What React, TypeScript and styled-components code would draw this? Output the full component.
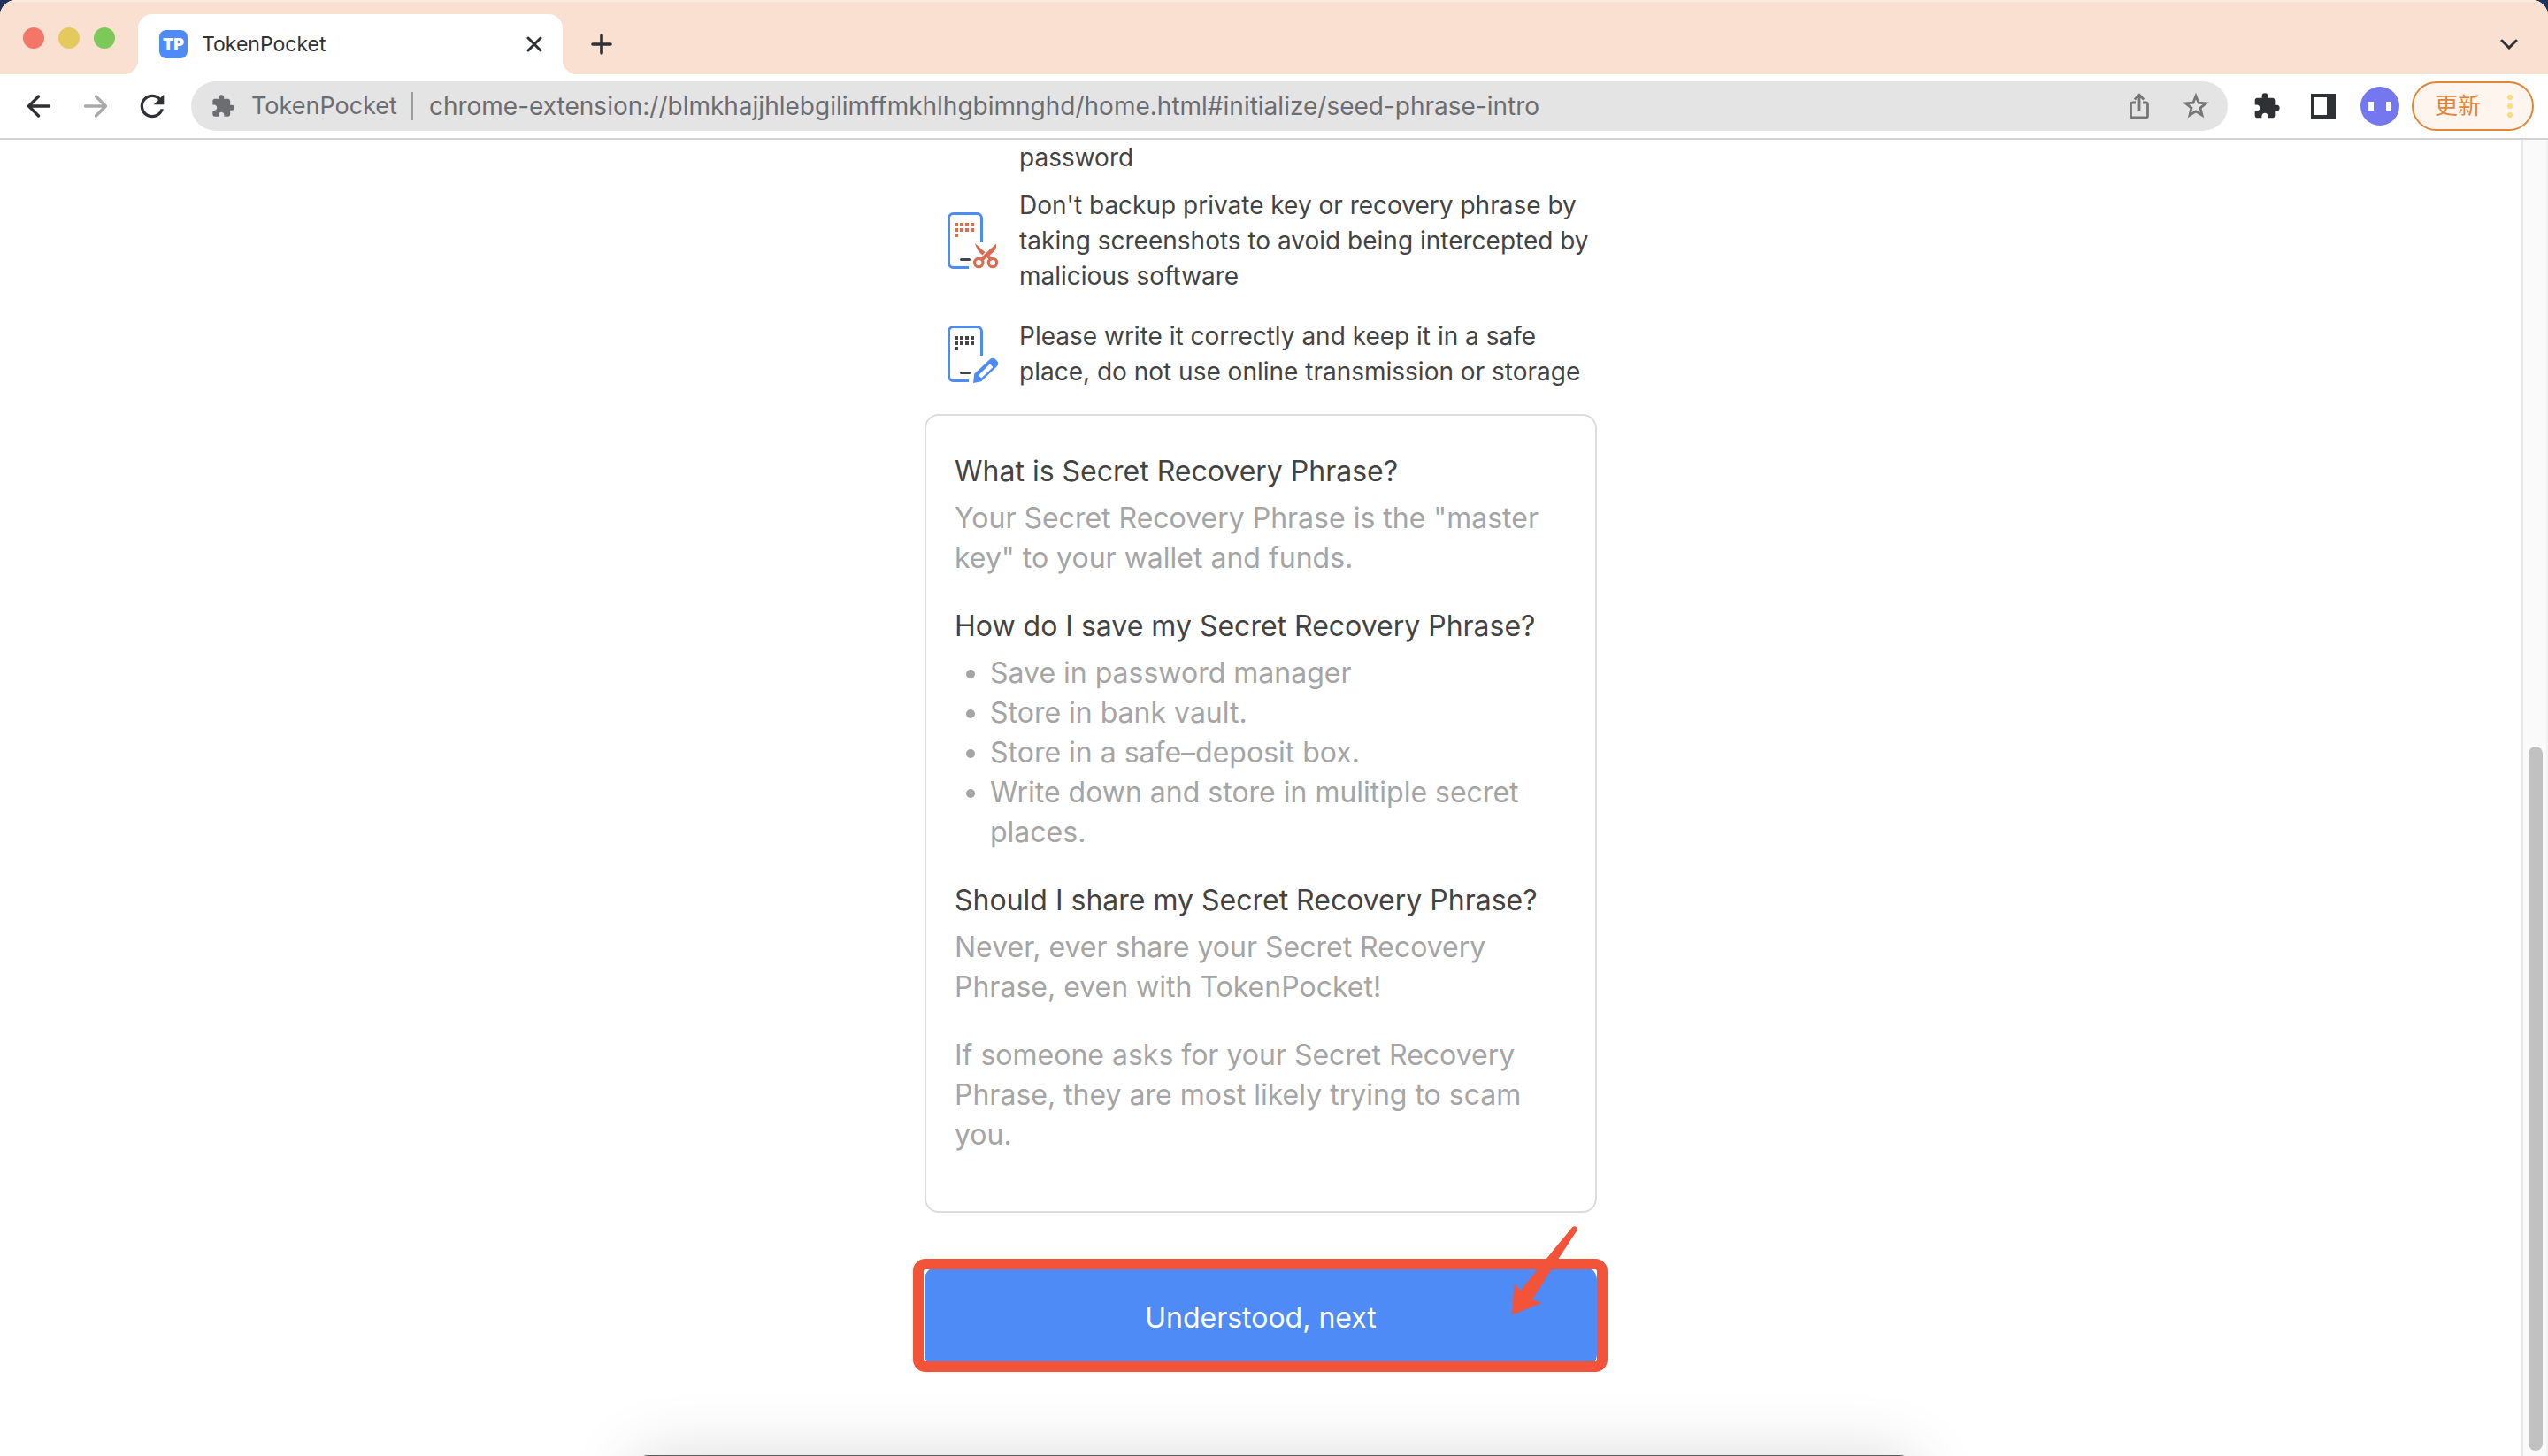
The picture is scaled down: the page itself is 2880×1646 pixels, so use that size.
import React from "react";
import styled, { createGlobalStyle } from "styled-components";
import { MdExtension, MdRefresh } from "react-icons/md";

const sans = `Inter, "Noto Sans CJK SC", sans-serif`;

const GlobalStyle = createGlobalStyle`
  *, *::before, *::after { box-sizing: border-box; }
  body { margin: 0; background: #1d3358; font-family: ${sans}; color: #434343; }
  button, input { font: inherit; color: inherit; }
  h2, p, ul { margin: 0; }
`;

const Window = styled.div`
  display: flex;
  flex-direction: column;
  min-height: 100vh;
  background: #fff;
  border-radius: 18px 18px 0 0;
  overflow: hidden;
`;

/* ---------- tab strip ---------- */

const TabStrip = styled.header`
  display: flex;
  align-items: flex-end;
  height: 84px;
  padding: 0 20px 0 26px;
  background: #fae0d1;
  border-top: 2px solid #fceae1;
`;

const TrafficLights = styled.div`
  display: flex;
  align-items: center;
  align-self: stretch;
  gap: 16px;
  margin-right: 26px;
`;

const Light = styled.button<{ $color: string }>`
  width: 24px;
  height: 24px;
  padding: 0;
  border: 0;
  border-radius: 50%;
  background: ${(p) => p.$color};
`;

const Tab = styled.div`
  position: relative;
  display: flex;
  align-items: center;
  width: 480px;
  height: 68px;
  padding: 0 8px 0 24px;
  border-radius: 16px 16px 0 0;
  background: #fff;

  &::before,
  &::after {
    content: "";
    position: absolute;
    bottom: 0;
    width: 16px;
    height: 16px;
  }
  &::before {
    right: 100%;
    background: radial-gradient(circle at 0 0, transparent 16px, #fff 16px);
  }
  &::after {
    left: 100%;
    background: radial-gradient(circle at 100% 0, transparent 16px, #fff 16px);
  }
`;

const Favicon = styled.span`
  display: grid;
  place-items: center;
  width: 32px;
  height: 32px;
  margin-right: 16px;
  border-radius: 8px;
  background: #4f8bf7;
  color: #fff;
  font-size: 18px;
  font-weight: 900;
  line-height: 32px;
`;

const TabTitle = styled.span`
  flex: 1;
  font-size: 23px;
  line-height: 32px;
  color: #303134;
`;

const IconButton = styled.button<{ $color?: string }>`
  display: grid;
  place-items: center;
  flex: none;
  width: 48px;
  height: 48px;
  padding: 0;
  border: 0;
  background: none;
  color: ${(p) => p.$color ?? "#303134"};
`;

const StripButton = styled(IconButton)`
  height: 68px;
`;

const NewTab = styled(StripButton)`
  margin: 0 auto 0 20px;
`;

/* ---------- toolbar ---------- */

const Toolbar = styled.nav`
  display: flex;
  align-items: center;
  gap: 16px;
  height: 74px;
  padding: 0 16px 0 20px;
  border-bottom: 2px solid #d3d3d3;
`;

const Omnibox = styled.div`
  display: flex;
  flex: 1;
  align-items: center;
  height: 56px;
  margin: 0 4px;
  padding: 0 12px 0 22px;
  border-radius: 28px;
  background: #e4e4e4;
  color: #6c6d71;
`;

const Origin = styled.button`
  display: flex;
  align-items: center;
  gap: 18px;
  padding: 0;
  border: 0;
  background: none;
  font-size: 27px;
  line-height: 32px;
`;

const Divider = styled.span`
  width: 2px;
  height: 32px;
  margin: 0 18px 0 16px;
  background: #9c9c9e;
`;

const Address = styled.input`
  flex: 1;
  min-width: 0;
  padding: 0;
  border: 0;
  outline: 0;
  background: none;
  font-size: 28px;
  line-height: 32px;
`;

const OmniboxActions = styled.div`
  display: flex;
  gap: 16px;
`;

const Avatar = styled.button`
  display: flex;
  align-items: center;
  justify-content: center;
  gap: 14px;
  flex: none;
  width: 44px;
  height: 44px;
  margin: 0 -2px 0 2px;
  padding: 0;
  border: 0;
  border-radius: 50%;
  background: #7477ee;
`;

const Eye = styled.span`
  flex: none;
  width: 6px;
  height: 10px;
  background: #fff;
`;

const UpdateButton = styled.button`
  display: flex;
  align-items: center;
  justify-content: space-between;
  width: 138px;
  height: 56px;
  padding: 0 22px 0 24px;
  border: 2px solid #e0863a;
  border-radius: 28px;
  background: #fef5ee;
  color: #e0863a;
  font-size: 26px;
  line-height: 32px;
`;

/* ---------- page ---------- */

const Viewport = styled.div`
  display: flex;
  flex: 1;
`;

const Page = styled.main`
  flex: 1;
`;

const Column = styled.div`
  width: 760px;
  margin: 0 auto;
`;

const Tip = styled.div<{ $after: number }>`
  display: grid;
  grid-template-columns: 64px 1fr;
  column-gap: 21px;
  align-items: center;
  padding-left: 22px;
  margin-bottom: ${(p) => p.$after}px;
  font-size: 28px;
  line-height: 40px;

  p {
    grid-column: 2;
  }
`;

const Card = styled.section`
  padding: 40px 32px 64px;
  border: 2px solid #dcdcdc;
  border-radius: 16px;
  font-size: 32px;
  line-height: 45px;
`;

const Question = styled.h2`
  margin-bottom: 8px;
  font-size: 32px;
  font-weight: 400;
`;

const Answer = styled.p`
  color: #a5a5a5;

  & + &, & + ${Question} {
    margin-top: 32px;
  }
`;

const AnswerList = styled.ul`
  margin-bottom: 32px;
  padding-left: 40px;
  color: #a5a5a5;
`;

const Action = styled.div`
  position: relative;
  margin: 60px 0 98px;
`;

const Primary = styled.button`
  display: block;
  width: 100%;
  height: 116px;
  border: 0;
  border-radius: 16px;
  background: #4f8bf7;
  color: #fff;
  font-size: 32px;
`;

const Highlight = styled.div`
  position: absolute;
  inset: -8px -12px -4px -13px;
  border: 12px solid #f35339;
  border-radius: 14px;
  pointer-events: none;
`;

const Arrow = styled.svg`
  position: absolute;
  top: -47px;
  right: 19px;
  fill: #f35339;
  pointer-events: none;
`;

const ScrollTrack = styled.div`
  display: flex;
  flex-direction: column;
  width: 30px;
  padding: 0 4px 6px 6px;
  border-left: 2px solid #e8e8e8;
  border-right: 2px solid #f3f3f3;
  background: #fafafa;

  &::before {
    content: "";
    flex: 686;
  }
`;

const Thumb = styled.div`
  flex: 796;
  border-radius: 8px;
  background: #c1c1c1;
`;

const DockedWindow = styled.div`
  position: fixed;
  bottom: -199px;
  left: 50%;
  width: 1440px;
  height: 200px;
  margin-left: -720px;
  border-radius: 12px;
  background: #5c5c5c;
  box-shadow: 0 8px 80px rgba(0, 0, 0, 0.18);
`;

/* ---------- drawings ---------- */

function ArrowIcon({ forward }: { forward?: boolean }) {
  return (
    <svg width="32" height="32" viewBox="0 0 32 32" fill="none" stroke="currentColor" strokeWidth="3.4" strokeLinecap="round" strokeLinejoin="round">
      {forward ? <path d="M4.5 16H27M16.5 5l11 11-11 11" /> : <path d="M27.5 16H5M15.5 5l-11 11 11 11" />}
    </svg>
  );
}

function PhoneIcon({ dots, children }: { dots: string; children: React.ReactNode }) {
  const cells = [0, 1, 2, 3, 4, 5, 6, 7, 8];
  return (
    <svg width="64" height="72" viewBox="-1 0 64 72" aria-hidden="true">
      <path d="M41.5 38V10.5a5 5 0 0 0-5-5h-27a5 5 0 0 0-5 5v51a5 5 0 0 0 5 5H27" fill="none" stroke="#4f8bf7" strokeWidth="3" />
      {cells.map((i) => (
        <rect key={i} x={11 + (i % 4) * 6} y={16 + Math.floor(i / 4) * 6} width="4" height="4" fill={dots} />
      ))}
      <rect x="17" y="56" width="12" height="3" rx="1.5" fill="#434343" />
      {children}
    </svg>
  );
}

function Scissors() {
  return (
    <g fill="#dd6b50">
      <path d="M58 39.5v4.2q-1 3.6-4 6l-11 9.3-3-3z" />
      <path d="M34 39l11.5 10.2-3 3.3q-6-4-8.5-13.5z" />
      <path d="M46.8 54.5l2.7-2.4 5 4.2-2.5 3z" />
      <circle cx="38.3" cy="61" r="4.7" fill="none" stroke="#dd6b50" strokeWidth="3.2" />
      <circle cx="54" cy="61" r="4.7" fill="none" stroke="#dd6b50" strokeWidth="3.2" />
    </g>
  );
}

function Pencil() {
  return (
    <path
      fill="#4f8bf7"
      fillRule="evenodd"
      d="M32 69l1.3-10.5L51 42q3.3-2.5 6.300.3l1.700 1.700q2.600 3 0 6L41 67.200zM38 60.300l3.300 3.300L54.300 51 51 47.300z"
    />
  );
}

/* ---------- app ---------- */

export default function App() {
  return (
    <Window>
      <GlobalStyle />
      <TabStrip>
        <TrafficLights>
          <Light $color="#f37669" aria-label="Close window" />
          <Light $color="#e4c95d" aria-label="Minimize window" />
          <Light $color="#7cc95a" aria-label="Zoom window" />
        </TrafficLights>
        <Tab>
          <Favicon>TP</Favicon>
          <TabTitle>TokenPocket</TabTitle>
          <IconButton aria-label="Close tab">
            <svg width="18" height="18" viewBox="0 0 18 18" stroke="currentColor" strokeWidth="3" strokeLinecap="round">
              <path d="M2 2l14 14M16 2L2 16" />
            </svg>
          </IconButton>
        </Tab>
        <NewTab aria-label="New tab">
          <svg width="24" height="24" viewBox="0 0 24 24" stroke="currentColor" strokeWidth="3.6" strokeLinecap="round">
            <path d="M12 2v20M2 12h20" />
          </svg>
        </NewTab>
        <StripButton aria-label="Search tabs">
          <svg width="20" height="12" viewBox="0 0 20 12" fill="none" stroke="currentColor" strokeWidth="3" strokeLinecap="round">
            <path d="M2 2l8 8 8-8" />
          </svg>
        </StripButton>
      </TabStrip>

      <Toolbar>
        <IconButton aria-label="Back"><ArrowIcon /></IconButton>
        <IconButton aria-label="Forward" $color="#a9a9ab"><ArrowIcon forward /></IconButton>
        <IconButton aria-label="Reload"><MdRefresh size={40} /></IconButton>
        <Omnibox>
          <Origin>
            <MdExtension size={28} />
            TokenPocket
          </Origin>
          <Divider />
          <Address
            aria-label="Address"
            defaultValue="chrome-extension://blmkhajjhlebgilimffmkhlhgbimnghd/home.html#initialize/seed-phrase-intro"
            spellCheck={false}
          />
          <OmniboxActions>
            <IconButton aria-label="Share" $color="#767676">
              <svg width="24" height="32" viewBox="0 0 24 32" fill="none" stroke="currentColor" strokeWidth="2.8">
                <path d="M8 12H4.5a2 2 0 0 0-2 2v13a2 2 0 0 0 2 2h15a2 2 0 0 0 2-2V14a2 2 0 0 0-2-2H16M12 21V4M6.8 8.5L12 3.3l5.2 5.2" />
              </svg>
            </IconButton>
            <IconButton aria-label="Bookmark" $color="#767676">
              <svg width="32" height="32" viewBox="0 0 32 32" fill="none" stroke="currentColor" strokeWidth="2.8">
                <path d="M16 4.5l3.1 7.7 8.3.6-6.4 5.3 2 8.1-7-4.4-7 4.4 2-8.1-6.4-5.3 8.3-.6z" />
              </svg>
            </IconButton>
          </OmniboxActions>
        </Omnibox>
        <IconButton aria-label="Extensions"><MdExtension size={32} /></IconButton>
        <IconButton aria-label="Side panel">
          <svg width="28" height="28" viewBox="0 0 28 28">
            <path fill="currentColor" fillRule="evenodd" d="M0 0h28v28H0zM4 4v20h14V4z" />
          </svg>
        </IconButton>
        <Avatar aria-label="Profile"><Eye /><Eye /></Avatar>
        <UpdateButton>
          更新
          <svg width="6" height="26" viewBox="0 0 6 26" fill="#fadb7e">
            <circle cx="3" cy="3" r="3" />
            <circle cx="3" cy="13" r="3" />
            <circle cx="3" cy="23" r="3" />
          </svg>
        </UpdateButton>
      </Toolbar>

      <Viewport>
        <Page>
          <Column>
            <Tip $after={14}>
              <p>password</p>
            </Tip>
            <Tip $after={28}>
              <PhoneIcon dots="#dd6b50"><Scissors /></PhoneIcon>
              <p>
                Don't backup private key or recovery phrase by taking screenshots to avoid being
                intercepted by malicious software
              </p>
            </Tip>
            <Tip $after={28}>
              <PhoneIcon dots="#434343"><Pencil /></PhoneIcon>
              <p>
                Please write it correctly and keep it in a safe place, do not use online
                transmission or storage
              </p>
            </Tip>

            <Card>
              <Question>What is Secret Recovery Phrase?</Question>
              <Answer>Your Secret Recovery Phrase is the "master key" to your wallet and funds.</Answer>
              <Question>How do I save my Secret Recovery Phrase?</Question>
              <AnswerList>
                <li>Save in password manager</li>
                <li>Store in bank vault.</li>
                <li>Store in a safe–deposit box.</li>
                <li>Write down and store in mulitiple secret places.</li>
              </AnswerList>
              <Question>Should I share my Secret Recovery Phrase?</Question>
              <Answer>Never, ever share your Secret Recovery Phrase, even with TokenPocket!</Answer>
              <Answer>
                If someone asks for your Secret Recovery Phrase, they are most likely trying to
                scam you.
              </Answer>
            </Card>

            <Action>
              <Primary>Understood, next</Primary>
              <Highlight />
              <Arrow width="80" height="106" viewBox="0 0 80 106">
                <path d="M2.7 102.7l3-36 6.6 8.6 19-23.6L71 3.6q2.5-2.4 4.7-.6 2 1.7.6 4.3l-29 44.4L26 85.3l10.3 3.7z" />
              </Arrow>
            </Action>
          </Column>
        </Page>
        <ScrollTrack>
          <Thumb />
        </ScrollTrack>
      </Viewport>
      <DockedWindow />
    </Window>
  );
}
